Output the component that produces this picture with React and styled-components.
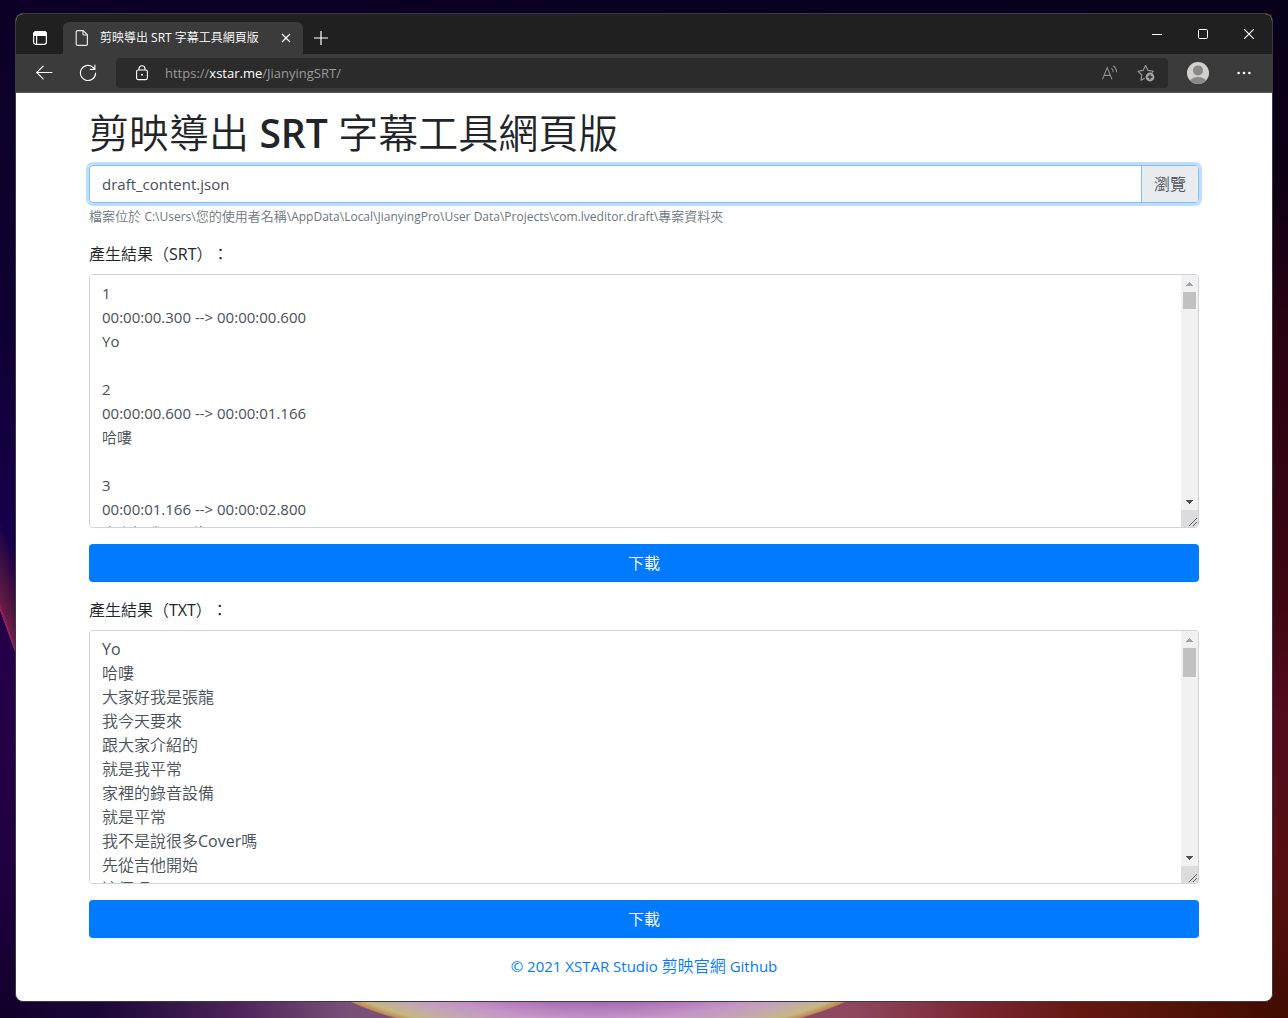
import React, { useRef, useState } from "react";
import styled, { createGlobalStyle } from "styled-components";

const CAPTIONS = [
  ["00:00:00.300", "00:00:00.600", "Yo"],
  ["00:00:00.600", "00:00:01.166", "哈嘍"],
  ["00:00:01.166", "00:00:02.800", "大家好我是張龍"],
  ["00:00:02.800", "00:00:03.700", "我今天要來"],
  ["00:00:03.700", "00:00:04.600", "跟大家介紹的"],
  ["00:00:04.600", "00:00:05.500", "就是我平常"],
  ["00:00:05.500", "00:00:06.900", "家裡的錄音設備"],
  ["00:00:06.900", "00:00:07.700", "就是平常"],
  ["00:00:07.700", "00:00:09.200", "我不是說很多Cover嗎"],
  ["00:00:09.200", "00:00:10.400", "先從吉他開始"],
  ["00:00:10.400", "00:00:11.100", "這個吧"],
];

const toSrt = captions => captions.map(([start, end, text], i) => `${i + 1}\n${start} --> ${end}\n${text}\n`).join("\n");
const toTxt = captions => captions.map(([, , text]) => text).join("\n");

const BrowserChrome = () => (
  <header>
    <TitleBar>
      <StripButton aria-label="Tab actions">
        <svg width="16" height="16" viewBox="0 0 16 16" fill="none" stroke="#fff" strokeWidth="1.2">
          <rect x="1.6" y="1.6" width="12.8" height="12.8" rx="2.4" />
          <path d="M1.6 4.2a2.6 2.6 0 0 1 2.6-2.6h7.6a2.6 2.6 0 0 1 2.6 2.6v1.2H1.6z" fill="#fff" />
          <path d="M4.6 5v9.2" />
        </svg>
      </StripButton>
      <Tab>
        <svg width="14" height="18" viewBox="0 0 14 18" fill="none" stroke="#e8e8e8" strokeWidth="1.2">
          <path d="M2.6 1.6h5.6l4.2 4.2v9.2a1.4 1.4 0 0 1-1.4 1.4H2.6a1.4 1.4 0 0 1-1.4-1.4V3a1.4 1.4 0 0 1 1.4-1.4z" />
          <path d="M8 1.8V5a1 1 0 0 0 1 1h3.2" />
        </svg>
        <TabTitle>剪映導出 SRT 字幕工具網頁版</TabTitle>
        <TabClose aria-label="Close tab">
          <svg width="10" height="10" viewBox="0 0 10 10" stroke="#fff" strokeWidth="1.3">
            <path d="M1 1l8 8M9 1L1 9" />
          </svg>
        </TabClose>
      </Tab>
      <NewTab aria-label="New tab">
        <svg width="14" height="14" viewBox="0 0 14 14" stroke="#fff" strokeWidth="1.2">
          <path d="M7 0v14M0 7h14" />
        </svg>
      </NewTab>
      <WindowControls>
        <ControlButton aria-label="Minimize">
          <svg width="10" height="10" viewBox="0 0 10 10" stroke="#fff">
            <path d="M0 5.5h10" />
          </svg>
        </ControlButton>
        <ControlButton aria-label="Maximize">
          <svg width="10" height="10" viewBox="0 0 10 10" fill="none" stroke="#fff">
            <rect x="0.5" y="0.5" width="9" height="9" rx="1.2" />
          </svg>
        </ControlButton>
        <ControlButton aria-label="Close">
          <svg width="10" height="10" viewBox="0 0 10 10" stroke="#fff" strokeWidth="1.1">
            <path d="M0 0l10 10M10 0L0 10" />
          </svg>
        </ControlButton>
      </WindowControls>
    </TitleBar>
    <Toolbar>
      <ToolButton aria-label="Back">
        <svg width="18" height="16" viewBox="0 0 18 16" fill="none" stroke="#fff" strokeWidth="1.1">
          <path d="M17 7.5H1.6M8.2 1.1L1.6 7.5l6.6 6.4" strokeLinecap="round" />
        </svg>
      </ToolButton>
      <ToolButton aria-label="Refresh">
        <svg width="18" height="18" viewBox="0 0 18 18" fill="none" stroke="#fff" strokeWidth="1.1">
          <path d="M16.6 9A7.6 7.6 0 1 1 14.6 3.8L15.8 5.2M15.9 1v4.4h-4.6" strokeLinecap="round" />
        </svg>
      </ToolButton>
      <AddressBar>
        <svg width="14" height="16" viewBox="0 0 14 16" fill="none" stroke="#fff" strokeWidth="1.1">
          <rect x="1.6" y="5" width="10.8" height="9.6" rx="1.6" />
          <path d="M4 5V3.8a3 3 0 0 1 6 0V5" />
          <circle cx="7" cy="9.8" r="1" fill="#fff" stroke="none" />
        </svg>
        <Address role="textbox" aria-label="Address" tabIndex={0}>
          https://<b>xstar.me</b>/JianyingSRT/
        </Address>
        <BarButton aria-label="Read aloud">
          <svg width="18" height="18" viewBox="0 0 18 18" fill="none" stroke="#8f8f8f" strokeWidth="1.1">
            <path d="M1.4 15.4L6.2 3.6 11 15.4M3 11.4h6.4" />
            <path d="M10.4 4.2a5 5 0 0 1 1.8 4M12.2 1.8a8 8 0 0 1 3.4 6.4" />
          </svg>
        </BarButton>
        <BarButton aria-label="Add to favorites">
          <svg width="18" height="18" viewBox="0 0 18 18" fill="none" stroke="#9a9a9a" strokeWidth="1.1">
            <path d="M7.6 14.2L4 16.2l.8-5.2L1 7.2l5-.8L8.6 1.6 11 6.4l5.4.8-1.4 1.4" strokeLinejoin="round" />
            <circle cx="13" cy="13" r="4.4" fill="#a6a6a6" stroke="none" />
            <path d="M13 10.6v4.8M10.6 13h4.8" stroke="#2b2b2b" strokeWidth="1.3" />
          </svg>
        </BarButton>
      </AddressBar>
      <ProfileButton aria-label="Profile">
        <svg width="22" height="22" viewBox="0 0 22 22">
          <clipPath id="avatar">
            <circle cx="11" cy="11" r="11" />
          </clipPath>
          <g clipPath="url(#avatar)">
            <rect width="22" height="22" fill="#d2d0ce" />
            <circle cx="11" cy="8.4" r="5" fill="#8a8886" />
            <ellipse cx="11" cy="20" rx="8" ry="5" fill="#8a8886" />
          </g>
        </svg>
      </ProfileButton>
      <MenuButton aria-label="Settings and more">
        <svg width="14" height="4" viewBox="0 0 14 4" fill="#fff">
          <circle cx="1.6" cy="2" r="1.3" />
          <circle cx="7" cy="2" r="1.3" />
          <circle cx="12.4" cy="2" r="1.3" />
        </svg>
      </MenuButton>
    </Toolbar>
  </header>
);

const ResultField = ({ id, label, value, latin, thumb }) => {
  const [text, setText] = useState(value);
  const area = useRef(null);

  const scrollByLine = direction => area.current.scrollBy({ top: direction * 24 });

  return (
    <>
      <ResultLabel htmlFor={id}>{label}</ResultLabel>
      <ResultBox>
        <ResultText id={id} ref={area} $latin={latin} value={text} onChange={event => setText(event.target.value)} />
        <Scrollbar>
          <ScrollButton type="button" aria-label="Scroll up" tabIndex={-1} onClick={() => scrollByLine(-1)}>
            <svg width="7" height="4" viewBox="0 0 7 4" fill="#a3a3a3" shapeRendering="crispEdges">
              <path d="M0 4h7L3.5 0z" />
            </svg>
          </ScrollButton>
          <Thumb $size={thumb} />
          <ScrollButton type="button" aria-label="Scroll down" tabIndex={-1} onClick={() => scrollByLine(1)}>
            <svg width="7" height="4" viewBox="0 0 7 4" fill="#505050" shapeRendering="crispEdges">
              <path d="M0 0h7L3.5 4z" />
            </svg>
          </ScrollButton>
          <Grip>
            <svg width="17" height="17" viewBox="0 0 17 17" stroke="#505050" strokeWidth="0.9">
              <path d="M8 16l8-8M12 16l4-4" />
            </svg>
          </Grip>
        </Scrollbar>
      </ResultBox>
      <DownloadButton type="button">下載</DownloadButton>
    </>
  );
};

const App = () => {
  const [fileName, setFileName] = useState("draft_content.json");

  return (
    <Desktop lang="zh-Hant">
      <GlobalStyle />
      <Window>
        <BrowserChrome />
        <Container>
          <Title>
            剪映導出 <strong>SRT</strong> 字幕工具網頁版
          </Title>
          <FilePicker>
            <FileInput
              id="draft"
              type="file"
              aria-describedby="draft-help"
              onChange={event => event.target.files[0] && setFileName(event.target.files[0].name)}
            />
            <FileLabel htmlFor="draft">
              <FileName>{fileName}</FileName>
              <Browse>瀏覽</Browse>
            </FileLabel>
          </FilePicker>
          <HelpText id="draft-help">
            檔案位於 <Path>C:\Users\</Path>您的使用者名稱
            <Path>\AppData\Local\JianyingPro\User Data\Projects\com.lveditor.draft\</Path>專案資料夾
          </HelpText>
          <ResultField id="srt" label="產生結果（SRT）：" value={toSrt(CAPTIONS)} thumb={17} latin />
          <ResultField id="txt" label="產生結果（TXT）：" value={toTxt(CAPTIONS)} thumb={29} />
          <Footer>
            <FooterLink href="#studio" $latin>
              © 2021 XSTAR Studio
            </FooterLink>{" "}
            <FooterLink href="#jianying">剪映官網</FooterLink>{" "}
            <FooterLink href="#github" $latin>
              Github
            </FooterLink>
          </Footer>
        </Container>
      </Window>
    </Desktop>
  );
};

export default App;

const GlobalStyle = createGlobalStyle`
  * {
    box-sizing: border-box;
  }

  body {
    margin: 0;
    font-family: "Open Sans", "Noto Sans CJK TC DemiLight", "Noto Sans CJK TC", sans-serif;
    font-size: 15px;
    line-height: 24px;
    color: #212529;
  }

  svg {
    display: block;
    flex: none;
  }
`;

const Desktop = styled.div`
  display: flex;
  min-height: 100vh;
  padding: 13px 15px 16px;
  background:
    linear-gradient(250deg, transparent 20%, #4c1440 50%, #6a1c48 66%, #a02060 70%, transparent 71%) 0 525px / 16px 140px no-repeat,
    linear-gradient(#0c0026, #0e0030 30%, #16004a 52%, #260048 66%, #200040 85%, #12002a) 0 0 / 16px 100% no-repeat,
    linear-gradient(#08001a, #0c0014 16%, #280212 32%, #3c0610 58%, #520a1c 70%, #560e10 86%, #400c00) 100% 0 / 16px 100% no-repeat,
    linear-gradient(90deg, #0c0026, #08001a) 0 0 / 100% 14px no-repeat,
    radial-gradient(ellipse 300px 93px at 598px calc(100% - 68px), #a86cb0 56%, #c494c8 74%, #c4a8b0 86%, #c4b880 95%, #c08858 99%, transparent 100%),
    linear-gradient(90deg, #12002a, #1c0838 8%, #4a2258 18%, #785078 27%, #904860 66%, #782630 76%, #641810 84%, #400c00);
`;

const Window = styled.div`
  flex: 1;
  min-width: 0;
  border: 1px solid #3c3844;
  border-radius: 8px;
  background: #fff;
  overflow: hidden;
`;

const BaseButton = styled.button`
  padding: 0;
  border: 0;
  background: none;
  color: inherit;
  font: inherit;
  cursor: pointer;
`;

const IconButton = styled(BaseButton)`
  display: grid;
  place-items: center;
  height: 30px;
`;

const TitleBar = styled.div`
  display: flex;
  align-items: flex-end;
  height: 40px;
  background: #202020;
`;

const StripButton = styled(IconButton)`
  width: 47px;
  height: 32px;
`;

const Tab = styled.div`
  display: flex;
  align-items: center;
  gap: 11px;
  width: 240px;
  height: 32px;
  padding: 0 10px 0 12px;
  border-radius: 6px 6px 0 0;
  background: #3b3b3b;
`;

const TabTitle = styled.span`
  flex: 1;
  overflow: hidden;
  white-space: nowrap;
  font-size: 12px;
  color: #fff;
`;

const TabClose = styled(IconButton)`
  width: 14px;
`;

const NewTab = styled(IconButton)`
  width: 35px;
  height: 32px;
`;

const WindowControls = styled.div`
  display: flex;
  align-self: flex-start;
  margin-left: auto;
`;

const ControlButton = styled(IconButton)`
  width: 46px;
  height: 40px;
`;

const Toolbar = styled.div`
  display: flex;
  align-items: center;
  height: 39px;
  padding: 0 12px 0 6px;
  border-bottom: 1px solid #5a5a5a;
  background: #3b3b3b;
`;

const ToolButton = styled(IconButton)`
  width: 44px;
`;

const AddressBar = styled.div`
  display: flex;
  flex: 1;
  align-items: center;
  gap: 16px;
  height: 30px;
  margin-left: 6px;
  padding: 0 12px 0 19px;
  border-radius: 4px;
  background: #2b2b2b;
`;

const Address = styled.div`
  flex: 1;
  font-size: 13px;
  color: #9a9a9a;

  b {
    font-weight: 400;
    color: #fff;
  }
`;

const BarButton = styled(IconButton)`
  width: 20px;
`;

const ProfileButton = styled(IconButton)`
  width: 60px;
`;

const MenuButton = styled(IconButton)`
  width: 32px;
`;

const Container = styled.main`
  max-width: 1140px;
  margin: 0 auto;
  padding: 16px 15px 23px;
`;

const Title = styled.h1`
  margin: 0 0 8px;
  font-size: 40px;
  font-weight: 300;
  line-height: 48px;

  strong {
    font-size: 39px;
    font-weight: 600;
  }
`;

const FilePicker = styled.div`
  position: relative;
  height: 38px;
`;

const FileInput = styled.input`
  position: absolute;
  inset: 0;
  width: 100%;
  opacity: 0;
  cursor: pointer;
`;

const FileLabel = styled.label`
  display: flex;
  height: 38px;
  border: 1px solid #80bdff;
  border-radius: 4px;
  box-shadow: 0 0 0 3px #bfdeff;
  color: #495057;
  line-height: 36px;
`;

const FileName = styled.span`
  flex: 1;
  padding: 0 12px;
`;

const Browse = styled.span`
  padding: 0 12px;
  border-left: 1px solid #80bdff;
  border-radius: 0 3px 3px 0;
  background: #e9ecef;
  font-size: 16px;
`;

const HelpText = styled.small`
  display: block;
  margin: 4px 0 16px;
  font-size: 13px;
  line-height: 19px;
  color: #6c757d;
`;

const Path = styled.span`
  font-size: 12px;
`;

const ResultLabel = styled.label`
  display: block;
  margin-bottom: 8px;
  font-size: 16px;
  text-spacing-trim: space-all;
`;

const ResultBox = styled.div`
  display: flex;
  height: 254px;
  border: 1px solid #ced4da;
  border-radius: 4px;
  overflow: hidden;
`;

const ResultText = styled.textarea`
  flex: 1;
  min-width: 0;
  padding: 6px 12px;
  border: 0;
  outline: none;
  resize: none;
  scrollbar-width: none;
  background: #fff;
  font-family: inherit;
  font-size: ${({ $latin }) => ($latin ? "15px" : "16px")};
  line-height: 24px;
  color: #495057;
`;

const Scrollbar = styled.div`
  display: flex;
  flex-direction: column;
  width: 17px;
  background: #f1f1f1;
`;

const ScrollButton = styled(IconButton)`
  width: 17px;
  height: 17px;
`;

const Thumb = styled.div`
  height: ${({ $size }) => $size}px;
  margin: 0 2px auto;
  background: #c1c1c1;
`;

const Grip = styled.div`
  height: 17px;
  background: #dcdcdc;
  cursor: ns-resize;
`;

const DownloadButton = styled(BaseButton)`
  display: block;
  width: 100%;
  height: 38px;
  margin: 16px 0;
  border-radius: 4px;
  background: #007bff;
  font-size: 16px;
  color: #fff;
`;

const Footer = styled.footer`
  text-align: center;
`;

const FooterLink = styled.a`
  font-size: ${({ $latin }) => ($latin ? "15px" : "16px")};
  color: #007bff;
  text-decoration: none;
`;
